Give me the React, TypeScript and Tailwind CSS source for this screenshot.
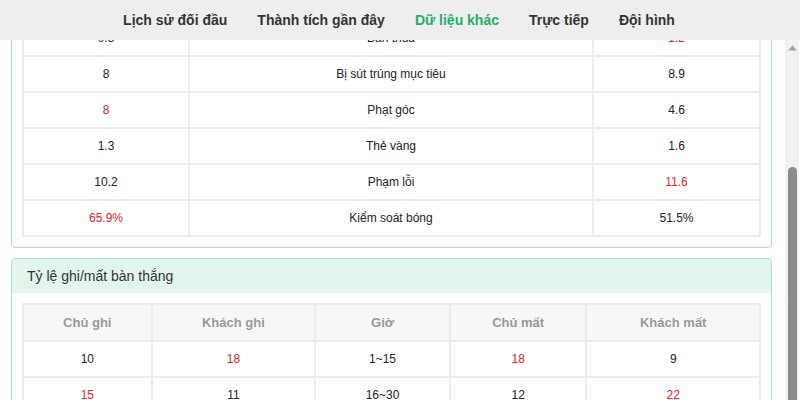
import React from 'react'

type Stat = { home: string; label: string; away: string; hot?: 'home' | 'away' }

const stats: Stat[] = [
  { home: '0.8', label: 'Bàn thua', away: '1.2', hot: 'away' },
  { home: '8', label: 'Bị sút trúng mục tiêu', away: '8.9' },
  { home: '8', label: 'Phạt góc', away: '4.6', hot: 'home' },
  { home: '1.3', label: 'Thẻ vàng', away: '1.6' },
  { home: '10.2', label: 'Phạm lỗi', away: '11.6', hot: 'away' },
  { home: '65.9%', label: 'Kiểm soát bóng', away: '51.5%', hot: 'home' },
]

const goalCols = ['Chủ ghi', 'Khách ghi', 'Giờ', 'Chủ mất', 'Khách mất']
const goalWidths = ['w-[129px]', 'w-[164px]', 'w-[135px]', 'w-[137px]', 'w-[174px]']

// [value, red?]
const goalRows: [string, boolean][][] = [
  [['10', false], ['18', true], ['1~15', false], ['18', true], ['9', false]],
  [['15', true], ['11', false], ['16~30', false], ['12', false], ['22', true]],
  [['14', false], ['12', false], ['31~45', false], ['16', true], ['13', false]],
]

const tabs = ['Lịch sử đối đầu', 'Thành tích gần đây', 'Dữ liệu khác', 'Trực tiếp', 'Đội hình']

export default function App() {
  return (
    <div className="w-[800px] h-[400px] overflow-hidden bg-white flex flex-col font-['Liberation_Sans',Arial,sans-serif] text-[#333]">
      {/* Tabs */}
      <div className="h-10 shrink-0 bg-[#eeeeee] flex items-center justify-center gap-[30px] pr-[2px]">
        {tabs.map((t) => (
          <span
            key={t}
            className={`text-[14px] font-bold ${t === 'Dữ liệu khác' ? 'text-[#1fae6b]' : 'text-[#333]'}`}
          >
            {t}
          </span>
        ))}
      </div>

      <div className="flex flex-1 min-h-0">
        <div className="flex-1 overflow-hidden">
          <div className="-mt-[32px] pl-[11px] pr-[13px]">
            {/* Stats card */}
            <div className="border border-[#9ee5cf] rounded-[4px] px-[10px] pt-[10px] pb-[10px]">
              <table className="w-full border-collapse border-2 border-[#ececec] text-[12px] text-[#222]">
                <tbody>
                  {stats.map((s) => (
                    <tr key={s.label} className="h-9">
                      <td className={`w-[166px] border-2 border-[#ececec] text-center ${s.hot === 'home' ? 'text-[#e0242c]' : ''}`}>
                        {s.home}
                      </td>
                      <td className="border-2 border-[#ececec] text-center">{s.label}</td>
                      <td className={`w-[167px] border-2 border-[#ececec] text-center ${s.hot === 'away' ? 'text-[#e0242c]' : ''}`}>
                        {s.away}
                      </td>
                    </tr>
                  ))}
                </tbody>
              </table>
            </div>

            {/* Goal rate card */}
            <div className="mt-[10px] border border-[#9ee5cf] rounded-[4px] overflow-hidden">
              <div className="h-[34px] bg-[#e2f6ee] flex items-center px-[15px] text-[14px] text-[#333]">
                Tỷ lệ ghi/mất bàn thắng
              </div>
              <div className="px-[10px] pt-[10px] pb-[9px]">
                <table className="w-full border-collapse border-2 border-[#ececec] text-[12px] text-[#222]">
                  <thead>
                    <tr className="h-[37px] bg-[#f7f7f7]">
                      {goalCols.map((c, i) => (
                        <th key={c} className={`${goalWidths[i]} border-2 border-[#ececec] text-center text-[13px] font-bold text-[#999]`}>
                          {c}
                        </th>
                      ))}
                    </tr>
                  </thead>
                  <tbody>
                    {goalRows.map((r, ri) => (
                      <tr key={ri} className="h-9">
                        {r.map(([v, red], ci) => (
                          <td key={ci} className={`border-2 border-[#ececec] text-center ${red ? 'text-[#e0242c]' : ''}`}>
                            {v}
                          </td>
                        ))}
                      </tr>
                    ))}
                  </tbody>
                </table>
              </div>
            </div>
          </div>
        </div>

        {/* Scrollbar */}
        <div className="w-[14px] shrink-0 bg-[#f1f1f1] flex flex-col items-center mr-[1px]">
          <svg width="9" height="6" viewBox="0 0 9 6" className="mt-[5px]">
            <path d="M0 5.5 L4.5 0.5 L9 5.5 Z" fill="#a3a3a3" />
          </svg>
          <div className="mt-[116px] w-[9px] flex-1 rounded-t-[5px] bg-[#8c8c8c]" />
        </div>
      </div>
    </div>
  )
}
